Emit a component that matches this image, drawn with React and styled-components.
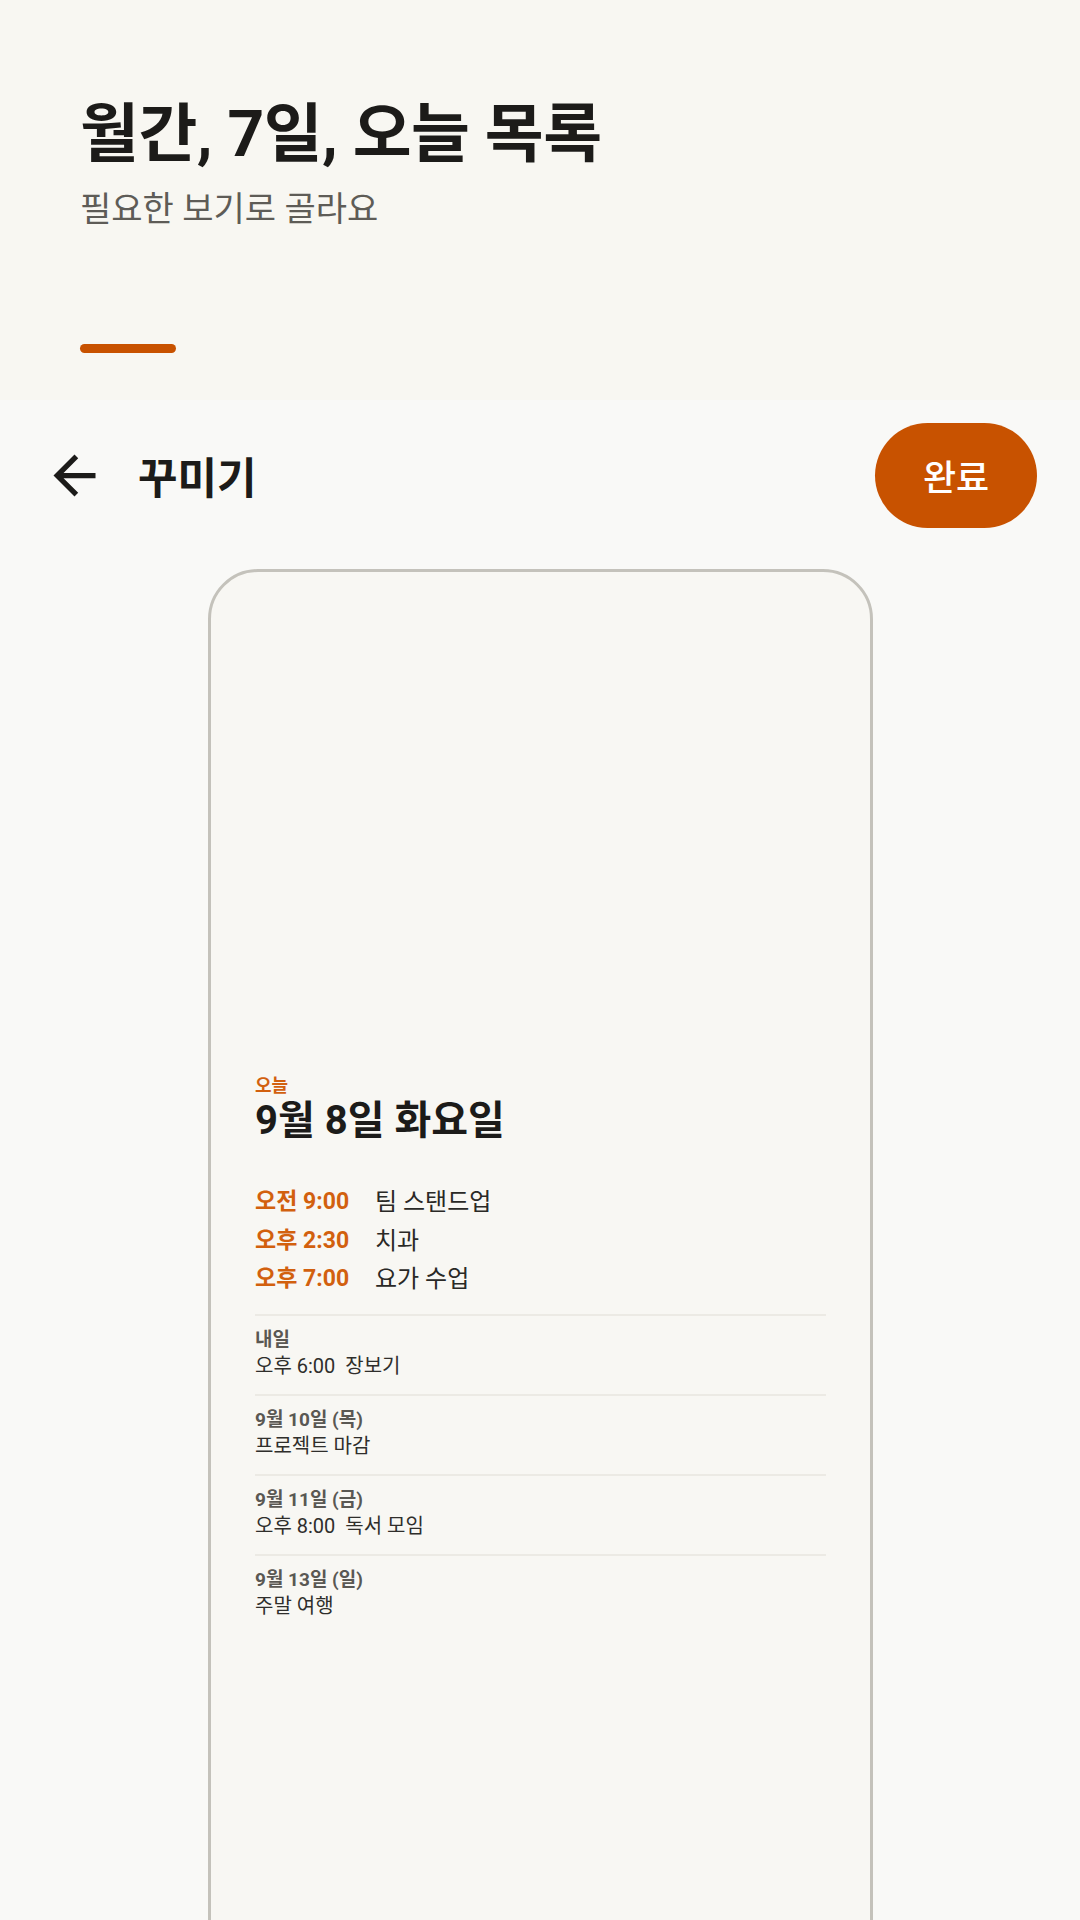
import React from "react";
import styled, { createGlobalStyle } from "styled-components";

const Global = createGlobalStyle`
  html, body { margin: 0; padding: 0; background: #F9F9F7; }
  body { font-family: Roboto, "Noto Sans CJK KR", sans-serif; color: #1C1B19; }
  * { box-sizing: border-box; }
`;

const Page = styled.div`
  width: 1080px;
  height: 1920px;
  overflow: hidden;
  display: flex;
  flex-direction: column;
  background: #F9F9F7;
`;

const Hero = styled.header`
  flex-shrink: 0;
  height: 400px;
  background: #F8F7F2;
  padding: 97px 80px 0 80px;
  display: flex;
  flex-direction: column;
`;

const Title = styled.h1`
  margin: 0;
  font-size: 64px;
  line-height: 76px;
  font-weight: 700;
  color: #1C1B19;
  letter-spacing: -0.5px;
`;

const Subtitle = styled.p`
  margin: 14px 0 0 0;
  font-size: 34px;
  line-height: 44px;
  font-weight: 400;
  color: #5E5C57;
`;

const Accent = styled.div`
  width: 96px;
  height: 9px;
  border-radius: 5px;
  background: #C85200;
  margin-top: 113px;
`;

const Toolbar = styled.div`
  flex-shrink: 0;
  height: 150px;
  display: flex;
  align-items: center;
  padding: 0 43px;
`;

const BackButton = styled.button`
  width: 63px;
  height: 63px;
  padding: 0;
  border: none;
  background: transparent;
  display: flex;
  align-items: center;
  justify-content: center;
  color: #1C1B19;
`;

const ToolbarTitle = styled.h2`
  margin: 0 0 0 32px;
  font-size: 43px;
  font-weight: 700;
  color: #1C1B19;
  flex: 1;
`;

const DoneButton = styled.button`
  width: 162px;
  height: 105px;
  border: none;
  border-radius: 53px;
  background: #C85200;
  color: #FFFFFF;
  font-family: Roboto, "Noto Sans CJK KR", sans-serif;
  font-size: 36px;
  font-weight: 500;
`;

const Stage = styled.div`
  display: flex;
  justify-content: center;
  padding-top: 19px;
  flex: 1;
  min-height: 0;
`;

const Frame = styled.div`
  flex-shrink: 0;
  width: 665px;
  height: 1500px;
  border: 3px solid #C4C2BB;
  border-radius: 50px;
  background: #F8F7F3;
  padding: 503px 44px 0 44px;
  margin-left: 1px;
`;

const Eyebrow = styled.div`
  font-size: 18px;
  line-height: 22px;
  font-weight: 700;
  color: #D2600E;
`;

const DateHeading = styled.div`
  font-size: 40px;
  line-height: 48px;
  font-weight: 700;
  color: #1C1B19;
`;

const Events = styled.div`
  margin-top: 38px;
  margin-bottom: 15px;
  display: flex;
  flex-direction: column;
`;

const EventRow = styled.div`
  display: grid;
  grid-template-columns: 120px 1fr;
  line-height: 38.5px;
`;

const EventTime = styled.span`
  font-size: 23px;
  font-weight: 700;
  color: #D2600E;
`;

const EventName = styled.span`
  font-size: 24px;
  font-weight: 400;
  color: #2A2926;
`;

const Upcoming = styled.div`
  border-top: 2px solid #ECEAE4;
  padding: 12px 0 14px 0;
  display: flex;
  flex-direction: column;
`;

const UpcomingLabel = styled.div`
  font-size: 19px;
  line-height: 24px;
  font-weight: 700;
  color: #5A5853;
`;

const UpcomingItem = styled.div`
  font-size: 20px;
  line-height: 28px;
  font-weight: 400;
  color: #2F2E2B;
  white-space: pre;
`;

const ArrowBack = () => (
  <svg width="63" height="63" viewBox="0 0 24 24" fill="currentColor" aria-hidden="true">
    <path d="M20 11H7.83l5.59-5.59L12 4l-8 8 8 8 1.41-1.41L7.83 13H20v-2z" />
  </svg>
);

const today = [
  { time: "오전 9:00", name: "팀 스탠드업" },
  { time: "오후 2:30", name: "치과" },
  { time: "오후 7:00", name: "요가 수업" },
];

const upcoming = [
  { label: "내일", item: "오후 6:00  장보기" },
  { label: "9월 10일 (목)", item: "프로젝트 마감" },
  { label: "9월 11일 (금)", item: "오후 8:00  독서 모임" },
  { label: "9월 13일 (일)", item: "주말 여행" },
];

export default function App() {
  return (
    <>
      <Global />
      <Page>
        <Hero>
          <Title>월간, 7일, 오늘 목록</Title>
          <Subtitle>필요한 보기로 골라요</Subtitle>
          <Accent />
        </Hero>
        <Toolbar>
          <BackButton aria-label="뒤로">
            <ArrowBack />
          </BackButton>
          <ToolbarTitle>꾸미기</ToolbarTitle>
          <DoneButton>완료</DoneButton>
        </Toolbar>
        <Stage>
          <Frame>
            <Eyebrow>오늘</Eyebrow>
            <DateHeading>9월 8일 화요일</DateHeading>
            <Events>
              {today.map((e) => (
                <EventRow key={e.time}>
                  <EventTime>{e.time}</EventTime>
                  <EventName>{e.name}</EventName>
                </EventRow>
              ))}
            </Events>
            {upcoming.map((u) => (
              <Upcoming key={u.label}>
                <UpcomingLabel>{u.label}</UpcomingLabel>
                <UpcomingItem>{u.item}</UpcomingItem>
              </Upcoming>
            ))}
          </Frame>
        </Stage>
      </Page>
    </>
  );
}
